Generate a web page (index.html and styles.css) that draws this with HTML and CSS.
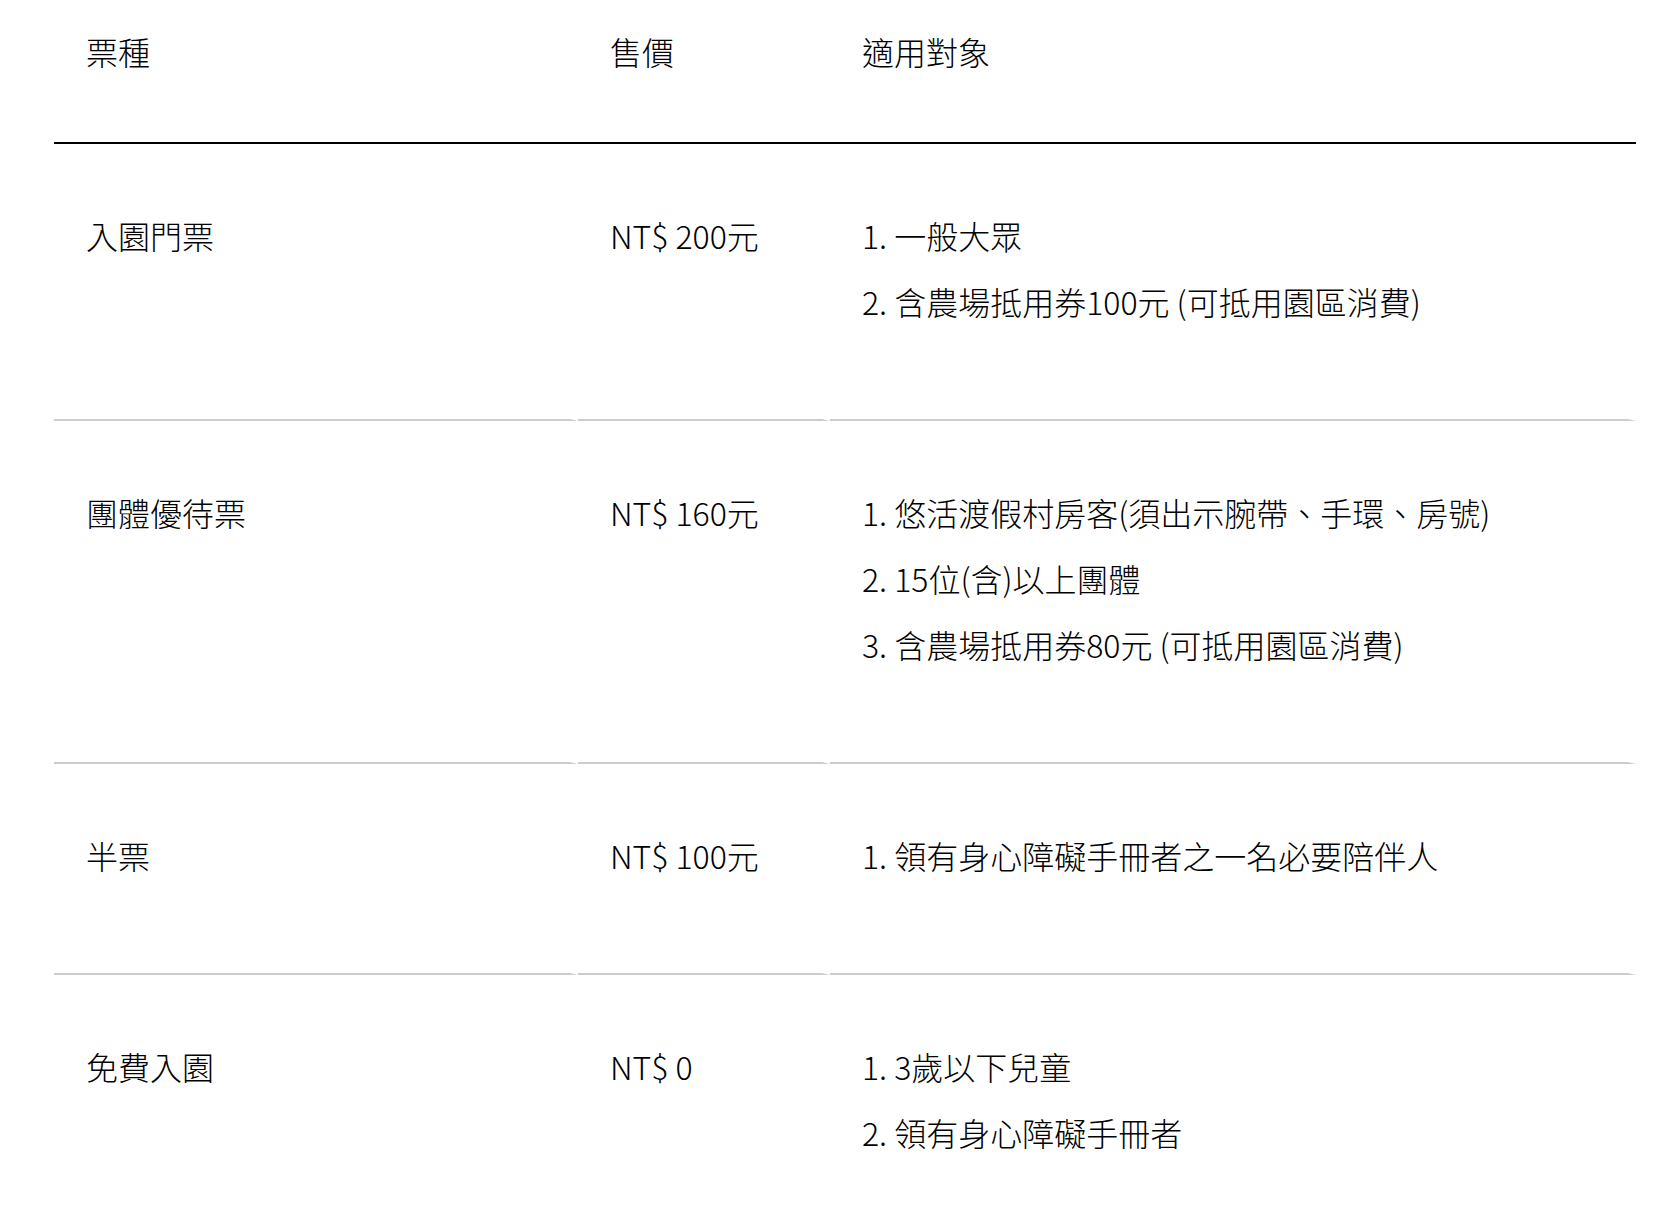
FILE: index.html
```html
<!DOCTYPE html>
<html lang="zh-Hant">
<head>
<meta charset="utf-8">
<title>票種</title>
<link rel="stylesheet" href="styles.css">
</head>
<body>
<div class="wrap">
  <table class="tickets">
    <thead>
      <tr>
        <th class="c-type">票種</th>
        <th class="c-price">售價</th>
        <th class="c-target">適用對象</th>
      </tr>
    </thead>
    <tbody>
      <tr>
        <td>入園門票</td>
        <td>NT$ 200元</td>
        <td>
          <p>1. 一般大眾</p>
          <p>2. 含農場抵用券100元 (可抵用園區消費)</p>
        </td>
      </tr>
      <tr>
        <td>團體優待票</td>
        <td>NT$ 160元</td>
        <td>
          <p>1. 悠活渡假村房客(須出示腕帶、手環、房號)</p>
          <p>2. 15位(含)以上團體</p>
          <p>3. 含農場抵用券80元 (可抵用園區消費)</p>
        </td>
      </tr>
      <tr>
        <td>半票</td>
        <td>NT$ 100元</td>
        <td>
          <p>1. 領有身心障礙手冊者之一名必要陪伴人</p>
        </td>
      </tr>
      <tr>
        <td>免費入園</td>
        <td>NT$ 0</td>
        <td>
          <p>1. 3歲以下兒童</p>
          <p>2. 領有身心障礙手冊者</p>
        </td>
      </tr>
    </tbody>
  </table>
</div>
</body>
</html>
```

FILE: styles.css
```css
html, body {
  margin: 0;
  padding: 0;
  background: #fff;
}

body {
  font-family: "Noto Sans CJK TC", "Noto Sans", sans-serif;
  font-size: 32px;
  font-weight: 300;
  line-height: 48px;
  color: #000;
}

.wrap {
  padding-left: 54px;
}

.tickets {
  width: 1582px;
  table-layout: fixed;
  border-collapse: separate;
  border-spacing: 0;
}

.tickets th {
  box-sizing: border-box;
  text-align: left;
  font-weight: 300;
  padding: 27px 32px 67px 32px;
  border-bottom: 2px solid #000;
  vertical-align: top;
}

.c-type { width: 524px; }
.c-price { width: 252px; }

.tickets td {
  box-sizing: border-box;
  padding: 67px 24px 94px 32px;
  border-right: 8px solid #fff;
  border-bottom: 2px solid #cccccc;
  vertical-align: top;
}

.tickets p {
  margin: 0;
}

.tickets p + p {
  margin-top: 18px;
}
```
